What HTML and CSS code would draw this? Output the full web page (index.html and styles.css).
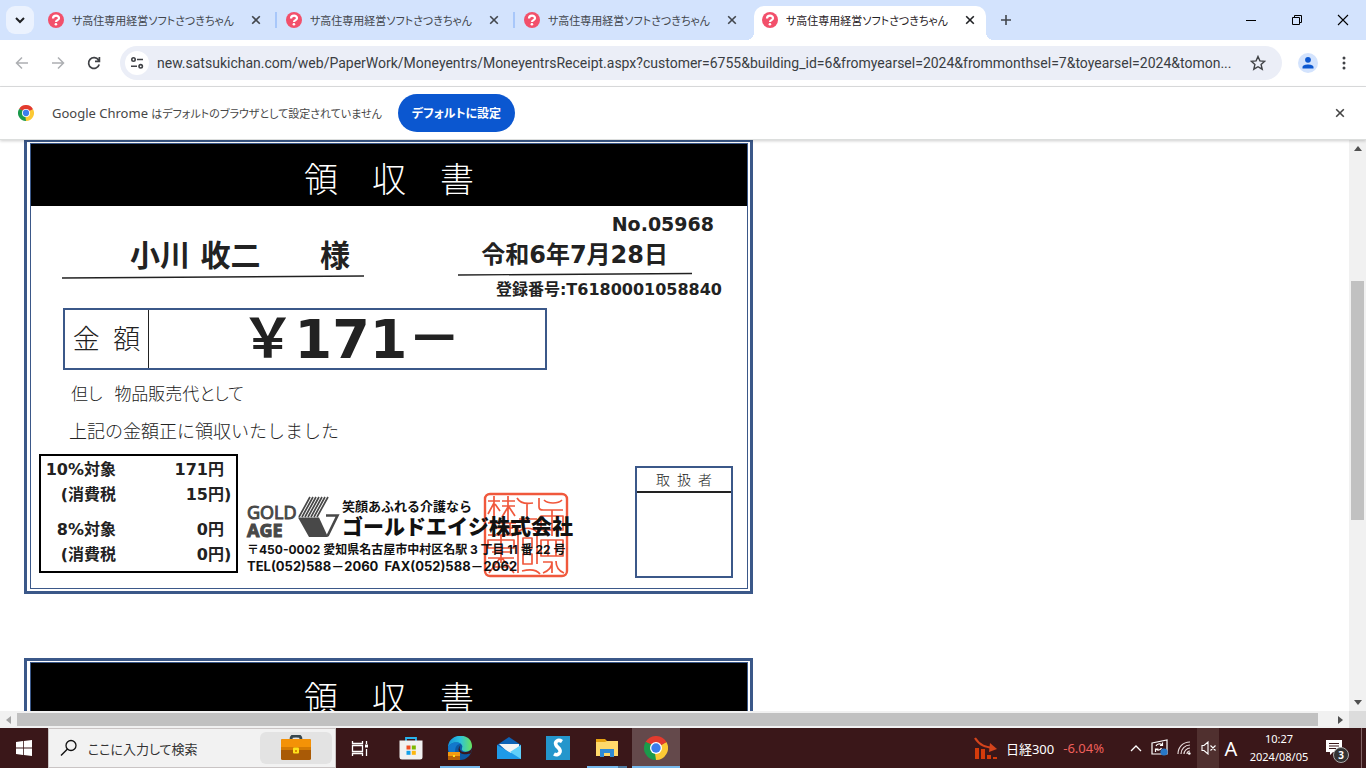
FILE: index.html
```html
<!DOCTYPE html>
<html lang="ja">
<head>
<meta charset="utf-8">
<title>サ高住専用経営ソフトさつきちゃん</title>
<link rel="stylesheet" href="styles.css">
</head>
<body>
<svg class="defs" aria-hidden="true">
  <symbol id="fav" viewBox="0 0 16 16"><circle cx="8" cy="8" r="8" fill="#f2506b"/><path d="M5 6.4C5 2.6 11.2 2.8 11 6.2 10.9 8.2 8 8 8 10" fill="none" stroke="#fff" stroke-width="2.2"/><circle cx="7.9" cy="12.3" r="1.3" fill="#fff"/></symbol>
  <symbol id="x" viewBox="0 0 10 10"><path d="M1.2 1.2l7.6 7.6M8.8 1.2L1.2 8.8" fill="none" stroke="currentColor" stroke-width="1.6"/></symbol>
  <symbol id="chrome" viewBox="0 0 48 48">
    <path d="M24 24L3.2 12A24 24 0 0 1 44.800 12z" fill="#e33b2e"/>
    <path d="M24 24L44.800 12A24 24 0 0 1 24 48z" fill="#fcc934"/>
    <path d="M24 24L24 48A24 24 0 0 1 3.200 12z" fill="#1b9a4b"/>
    <path d="M24 12h20.800L24 24z" fill="#e33b2e"/><path d="M34.400 30L24 48l-3-20z" fill="#fcc934"/><path d="M13.600 30L3.200 12 18 18z" fill="#1b9a4b"/>
    <circle cx="24" cy="24" r="12" fill="#fff"/><circle cx="24" cy="24" r="9.400" fill="#3b7ded"/>
  </symbol>
</svg>

<header class="tabstrip">
  <button class="tab-search" aria-label="タブを検索"><svg width="10" height="8" viewBox="0 0 10 8"><path d="M1 2l4 4 4-4" fill="none" stroke="currentColor" stroke-width="2"/></svg></button>
  <nav class="tabs">
    <div class="tab"><svg class="fav"><use href="#fav"/></svg><a href="#">サ高住専用経営ソフトさつきちゃん</a><button aria-label="閉じる"><svg><use href="#x"/></svg></button></div>
    <div class="tab"><svg class="fav"><use href="#fav"/></svg><a href="#">サ高住専用経営ソフトさつきちゃん</a><button aria-label="閉じる"><svg><use href="#x"/></svg></button></div>
    <div class="tab last"><svg class="fav"><use href="#fav"/></svg><a href="#">サ高住専用経営ソフトさつきちゃん</a><button aria-label="閉じる"><svg><use href="#x"/></svg></button></div>
    <div class="tab active"><svg class="fav"><use href="#fav"/></svg><a href="#">サ高住専用経営ソフトさつきちゃん</a><button aria-label="閉じる"><svg><use href="#x"/></svg></button></div>
  </nav>
  <button class="new-tab" aria-label="新しいタブ"><svg width="12" height="12" viewBox="0 0 12 12"><path d="M6 1v10M1 6h10" stroke="currentColor" stroke-width="1.600"/></svg></button>
  <div class="win">
    <button aria-label="最小化"><svg width="12" height="12" viewBox="0 0 12 12"><path d="M1 6.500h10" stroke="currentColor"/></svg></button>
    <button aria-label="元に戻す"><svg width="12" height="12" viewBox="0 0 12 12"><path d="M1.500 3.500h7v7h-7zM3.500 3.500v-2h7v7h-2" fill="none" stroke="currentColor"/></svg></button>
    <button aria-label="閉じる"><svg width="12" height="12" viewBox="0 0 12 12"><path d="M1 1l10 10M11 1L1 11" stroke="currentColor" stroke-width="1.100"/></svg></button>
  </div>
</header>

<div class="toolbar">
  <button class="nav off" aria-label="戻る"><svg width="14" height="14" viewBox="0 0 14 14"><path d="M13 7H2M7 1.500L1.500 7 7 12.500" fill="none" stroke="currentColor" stroke-width="1.500"/></svg></button>
  <button class="nav off" aria-label="進む"><svg width="14" height="14" viewBox="0 0 14 14"><path d="M1 7h11M7 1.500L12.500 7 7 12.500" fill="none" stroke="currentColor" stroke-width="1.500"/></svg></button>
  <button class="nav" aria-label="再読み込み"><svg width="14" height="14" viewBox="0 0 14 14"><path d="M12.200 8.500A5.400 5.400 0 1 1 11.500 4L12.500 5M12.400 1v4.400H8" fill="none" stroke="currentColor" stroke-width="1.700"/></svg></button>
  <div class="omnibox">
    <button class="site" aria-label="サイト情報"><svg width="14" height="14" viewBox="0 0 14 14"><g fill="none" stroke="currentColor" stroke-width="1.600"><circle cx="3.500" cy="3.500" r="1.700"/><path d="M7 3.500h6M1 10.300h6"/><circle cx="10.700" cy="10.300" r="1.700"/></g></svg></button>
    <input class="url" type="text" aria-label="アドレス" value="new.satsukichan.com/web/PaperWork/Moneyentrs/MoneyentrsReceipt.aspx?customer=6755&amp;building_id=6&amp;fromyearsel=2024&amp;frommonthsel=7&amp;toyearsel=2024&amp;tomon...">
    <button class="star" aria-label="ブックマーク"><svg width="16" height="16" viewBox="0 0 16 16"><path d="M8 1.500l1.900 4.400 4.800.4-3.600 3.200 1.100 4.700L8 11.700l-4.200 2.500 1.100-4.700L1.300 6.300l4.800-.4z" fill="none" stroke="currentColor" stroke-width="1.400"/></svg></button>
  </div>
  <button class="avatar" aria-label="プロフィール"><svg width="20" height="20" viewBox="0 0 20 20"><circle cx="10" cy="10" r="10" fill="#d3e3fd"/><circle cx="10" cy="6.800" r="2.900" fill="#0b57d0"/><path d="M4.500 15.500v-1.500c0-3.500 11-3.500 11 0v1.500z" fill="#0b57d0"/></svg></button>
  <button class="more" aria-label="メニュー"><svg width="4" height="14" viewBox="0 0 4 14"><g fill="currentColor"><circle cx="2" cy="2" r="1.500"/><circle cx="2" cy="7" r="1.500"/><circle cx="2" cy="12" r="1.500"/></g></svg></button>
</div>

<div class="infobar">
  <svg class="logo"><use href="#chrome"/></svg>
  <span class="msg">Google Chrome <span>はデフォルトのブラウザとして設定されていません</span></span>
  <button class="default">デフォルトに設定</button>
  <button class="dismiss" aria-label="閉じる"><svg><use href="#x"/></svg></button>
</div>

<main class="view">
  <div class="page">
    <article class="receipt"><div class="sheet">
      <h1>領　収　書</h1>
      <div class="top">
        <div class="customer">
          <p class="name"><span>小川 收二</span><span>様</span></p>
          <svg class="rule" viewBox="0 0 302 4" preserveAspectRatio="none"><path d="M0 3L302 1" stroke="#222" stroke-width="1.400"/></svg>
        </div>
        <div class="issue">
          <p class="no">No.05968</p>
          <p class="date">令和6年7月28日</p>
          <svg class="rule" viewBox="0 0 234 4" preserveAspectRatio="none"><path d="M0 3L234 1.500" stroke="#222" stroke-width="1.400"/></svg>
          <p class="reg">登録番号:T6180001058840</p>
        </div>
      </div>
      <div class="amount"><span class="label">金&ensp;額</span><strong>&#xFFE5;171&#xFF0D;</strong></div>
      <p class="note">但し<span>物品販売代として</span></p>
      <p class="note second">上記の金額正に領収いたしました</p>
      <div class="bottom">
        <table class="tax">
          <tr class="first"><th scope="row">10%対象</th><td>171円</td><td></td></tr>
          <tr><th scope="row">(消費税</th><td>15円</td><td>)</td></tr>
          <tr class="gap"><th scope="row">8%対象</th><td>0円</td><td></td></tr>
          <tr class="end"><th scope="row">(消費税</th><td>0円</td><td>)</td></tr>
        </table>
        <section class="company">
          <svg class="seal" width="86" height="86" viewBox="0 0 86 86" fill="none" stroke="#f0583c" stroke-width="1.700" stroke-linejoin="round">
            <rect x="2" y="2" width="82" height="82" rx="5" stroke-width="2.400"/>
            <path d="M5 9h12M11 4v24M11 11L5 22M12 12l5 7M19 9h13M25 4v24M19 14h13M25 15l-6 10M26 15l6 9M5 31h28M8 36h22M11 31v12M27 31v12M5 43h28"/>
            <path d="M34 6c3 5 10 6 16 5M44 11v15M36 27h18M56 6v9q0 3 4 3h20M61 8c4 4 14 4 18 0M58 24h22v14H58zM69 18v26"/>
            <path d="M5 48h26v8H5zM18 43v28M9 60h20M5 66h26M17 66L6 81M19 66l12 15M11 75h14M35 34v47M35 40c6-5 14-5 19 0v32M40 46h9v10h-9zM40 62h9v10h-9zM39 79c8-2 14-2 18 3"/>
            <path d="M58 48h22v16H58zM65 48v16M73 48v16M60 70h9v11M69 70c0 6-4 9-9 11M73 69c0 6 3 10 8 12"/>
          </svg>
          <div class="brand">
            <p class="ga">GOLD<b>AGE</b></p>
            <svg class="mark" width="42" height="42" viewBox="0 0 42 42"><path d="M0 21.500h21l9 19.500H11z" fill="#484848"/><path d="M1 21L12 1M4 21L15 1M7 21L18 1M10 21L21 1M13 21L24 1M16 21L27 1M19 21L30 1" stroke="#484848" stroke-width="1.700"/><path d="M28 19.500h11.500L29.500 40" fill="none" stroke="#484848" stroke-width="2.600"/></svg>
            <div><p class="slogan">笑顔あふれる介護なら</p><p class="corp">ゴールドエイジ株式会社</p></div>
          </div>
          <p class="addr">〒450-0002 愛知県名古屋市中村区名駅 3 丁目 11 番 22 号</p>
          <p class="tel">TEL(052)588&#xFF0D;2060&nbsp; FAX(052)588&#xFF0D;2062</p>
        </section>
        <div class="handler"><p>取&ensp;扱&ensp;者</p></div>
      </div>
    </div></article>
    <article class="receipt"><div class="sheet"><h1>領　収　書</h1></div></article>
  </div>
  <div class="vbar"><button aria-label="上へ"><svg width="8" height="5" viewBox="0 0 8 5"><path d="M0 5l4-5 4 5z" fill="#505050"/></svg></button><div class="track"><div class="thumb"></div></div><button aria-label="下へ"><svg width="8" height="5" viewBox="0 0 8 5"><path d="M0 0l4 5 4-5z" fill="#505050"/></svg></button></div>
</main>
<div class="hbar"><button aria-label="左へ"><svg width="5" height="8" viewBox="0 0 5 8"><path d="M5 0L0 4l5 4z" fill="#a3a3a3"/></svg></button><div class="thumb"></div><button class="right" aria-label="右へ"><svg width="5" height="8" viewBox="0 0 5 8"><path d="M0 0l5 4-5 4z" fill="#505050"/></svg></button><span class="corner"></span></div>

<footer class="taskbar">
  <button class="start" aria-label="スタート"><svg width="16" height="16" viewBox="0 0 16 16"><path d="M0 2l7-1v6.600H0zM7.800.9L16 0v7.600H7.800zM0 8.400h7V15l-7-1zM7.800 8.400H16V16l-8.200-1z" fill="#fff"/></svg></button>
  <label class="search"><svg width="18" height="18" viewBox="0 0 18 18"><circle cx="11" cy="6.500" r="5" fill="none" stroke="#111" stroke-width="1.300"/><path d="M7.500 10L1 16.500" stroke="#111" stroke-width="1.400"/></svg>
    <input type="text" placeholder="ここに入力して検索" aria-label="検索">
    <span class="bag"><svg width="30" height="26" viewBox="0 0 30 26"><path d="M10 5c0-4 1-4 5-4s5 0 5 4" fill="none" stroke="#37474f" stroke-width="3"/><rect y="4" width="30" height="21" rx="1.500" fill="#a95a06"/><path d="M0 5.500A1.500 1.500 0 0 1 1.500 4h27A1.500 1.500 0 0 1 30 5.500V15H0z" fill="#f49207"/><path d="M0 12h30v3H0z" fill="#d57a03"/><rect x="12" y="12.500" width="6" height="6" rx="1" fill="#ffe11a"/><path d="M14 15h2v2h-2z" fill="#d88c00"/></svg></span>
  </label>
  <button class="app view-btn" aria-label="タスクビュー"><svg width="18" height="17" viewBox="0 0 18 17"><path d="M1.500 1v2.500h10V1M1.500 16v-2.500h10V16M1.500 5.500h10v6h-10zM15.500 1v3M15.500 9v7" fill="none" stroke="#fff" stroke-width="1.300"/><path d="M14 4.500h3v3h-3z" fill="#fff"/></svg></button>
  <button class="app" aria-label="Store"><svg width="24" height="24" viewBox="0 0 24 24"><path d="M7 5V2h10v3" fill="none" stroke="#28b4ee" stroke-width="1.800"/><path d="M.5 4.500h23V21q0 2.500-2.500 2.500H3Q.5 23.500.5 21z" fill="#f1f1f1"/><path d="M7.500 9.500h4v4h-4z" fill="#f04e24"/><path d="M12.800 9.500h4v4h-4z" fill="#7db900"/><path d="M7.500 14.800h4v4h-4z" fill="#14a1ea"/><path d="M12.800 14.800h4v4h-4z" fill="#fdb70e"/></svg></button>
  <button class="app run" aria-label="Edge"><svg width="24" height="24" viewBox="0 0 24 24"><defs><linearGradient id="eg"><stop offset="0" stop-color="#1593d8"/><stop offset=".5" stop-color="#2cc1dd"/><stop offset="1" stop-color="#6be35b"/></linearGradient></defs><circle cx="12" cy="12" r="12" fill="#0c59a4"/><path d="M0 12C0-4 24-4 24 10c0 6-8 7-10 4-1-2 2-3-1-6C9 5 1 7 0 12z" fill="url(#eg)"/><path d="M13 9c-3 3-1 8 5 7 3 0 5-2 6-4 0 3-1 5-2 6-1-1-3 1-7 0-5-1-6-6-2-9z" fill="#3a171a"/><path d="M0 12c1-5 9-7 13-4-6-1-8 8-3 15C4 22 0 17 0 12z" fill="#1378cc"/><path d="M0 16h12v8H0z" fill="#b96207"/><path d="M0 16h12v4H0z" fill="#f39a11"/><path d="M5 19h2v2H5z" fill="#ffe11a"/></svg></button>
  <button class="app" aria-label="メール"><svg width="24" height="24" viewBox="0 0 24 24"><path d="M0 9L12 1l12 8v5H0z" fill="#0d62b5"/><path d="M2 8h20v8l-8 3z" fill="#f4f4f4"/><path d="M0 9l14 8L24 9v14H0z" fill="#1f9ae8"/><path d="M24 9v14L13 16z" fill="#60d0fa"/></svg></button>
  <button class="app" aria-label="S"><span class="s-tile"><svg width="24" height="24" viewBox="0 0 24 24"><path d="M16 5.500C12 3 8.500 5.500 10 9c1 2.500 5 3.500 4 7-.8 2.500-3.500 3.500-6 2" fill="none" stroke="#fff" stroke-width="3.600"/></svg></span></button>
  <button class="app run files" aria-label="エクスプローラー"><svg width="24" height="24" viewBox="0 0 24 24"><path d="M1 3h9l2 2h11v15H1z" fill="#e6a211"/><path d="M1 6h9l2-1h11v15H1z" fill="#ffd96b"/><path d="M5 21v-8h14v8h-4v-4H9v4z" fill="#2f8bd5"/></svg></button>
  <button class="app run current" aria-label="Google Chrome"><svg width="24" height="24"><use href="#chrome"/></svg></button>
  <div class="tray">
    <a class="stock" href="#"><svg width="24" height="24" viewBox="0 0 24 24"><path d="M1 2c5 8 11 9 18 10" fill="none" stroke="#d5441c" stroke-width="2.200"/><path d="M16 7l7 6-8 3z" fill="#d5441c"/><path d="M1 12h4v11H1zM7 13h4v10H7zM13 19h4v4h-4zM19 21h4v2h-4z" fill="#d33b0b"/></svg><span>日経300</span><em>-6.04%</em></a>
    <button class="t" aria-label="隠れているインジケーター"><svg width="12" height="8" viewBox="0 0 12 8"><path d="M1 7l5-5 5 5" fill="none" stroke="#fff" stroke-width="1.300"/></svg></button>
    <button class="t" aria-label="更新"><svg width="18" height="18" viewBox="0 0 18 18"><path d="M1 4l15-3v14H1z" fill="none" stroke="#fff" stroke-width="1.200"/><path d="M5 7c1-2 4-3 6-1M11.500 3.500v3H9M10.500 9c-1 2-4 3-5.500 1M4.500 13v-3h3" fill="none" stroke="#fff" stroke-width="1.200"/><circle cx="13" cy="13" r="3.600" fill="#2878c8"/></svg></button>
    <button class="t" aria-label="ネットワーク"><svg width="14" height="14" viewBox="0 0 14 14"><g fill="none" stroke="#e8dcdc" stroke-width="1.200"><path d="M1 13C1 6 6 1 13 1M4 13c0-5 4-9 9-9M7 13c0-3 3-6 6-6M10 13c0-2 1-3 3-3"/></g><circle cx="12.300" cy="12.500" r="1.300" fill="#fff"/></svg></button>
    <button class="t sound" aria-label="ミュート"><svg width="15" height="14" viewBox="0 0 15 14"><path d="M1 4.500h2l4-3.500v12L3 9.500H1zM9.500 4.500l5 5M14.500 4.500l-5 5" fill="none" stroke="#fff" stroke-width="1.100"/></svg></button>
    <button class="t ime">A</button>
    <div class="clock"><time>10:27</time><span>2024/08/05</span></div>
    <button class="bell" aria-label="通知"><svg width="16" height="16" viewBox="0 0 16 16"><path d="M0 0h16v12H7l-3 3v-3H0z" fill="#fff"/><path d="M3 3.500h10M3 6h10M3 8.500h7" stroke="#3a1719" stroke-width="1.200"/></svg><span>3</span></button>
    <span class="peek"></span>
  </div>
</footer>
</body>
</html>
```
FILE: styles.css
```css
* { box-sizing: border-box; }
html, body { height: 100%; }
body { margin: 0; display: flex; flex-direction: column; overflow: hidden; background: #fff; color: #202124; font-family: "Noto Sans", "Noto Sans CJK JP", sans-serif; font-size: 12px; }
button { border: 0; padding: 0; background: none; color: inherit; font: inherit; display: flex; align-items: center; justify-content: center; flex: none; }
input { border: 0; padding: 0; background: none; outline: 0; font: inherit; min-width: 0; }
a { color: inherit; text-decoration: none; }
p, h1 { margin: 0; }
svg { flex: none; display: block; }
.defs { position: absolute; width: 0; height: 0; }

.tabstrip { flex: none; height: 40px; display: flex; align-items: center; background: #d3e3fd; padding-left: 6px; }
.tab-search { width: 28px; height: 28px; border-radius: 9px; background: #ebf2fe; }
.tabs { display: flex; align-self: flex-end; margin-left: 6px; }
.tab { position: relative; width: 232px; margin-right: 6px; height: 34px; display: flex; align-items: center; padding: 0 10px 6px 8px; color: #42464c; }
.tab a { flex: 1; margin-left: 8px; white-space: nowrap; overflow: hidden; font-family: "Noto Sans CJK JP", sans-serif; font-feature-settings: "palt"; font-size: 11px; line-height: 18px; }
.fav { width: 16px; height: 16px; }
.tab button svg, .dismiss svg { width: 10px; height: 10px; }
.tab button { width: 12px; height: 16px; }
.tab:not(.active):not(.last)::after { content: ""; position: absolute; right: -5px; top: 6px; width: 2px; height: 16px; background: #a8c7fa; }
.tab.active { background: #fff; border-radius: 10px 10px 0 0; color: #1f2023; }
.tab.active::before, .tab.active::after { content: ""; position: absolute; bottom: 0; width: 8px; height: 8px; }
.tab.active::before { left: -8px; background: radial-gradient(circle at 0 0, #d3e3fd 8px, #fff 8px); }
.tab.active::after { right: -8px; background: radial-gradient(circle at 100% 0, #d3e3fd 8px, #fff 8px); }
.new-tab { width: 28px; height: 28px; color: #42464c; }
.win { margin-left: auto; display: flex; color: #000; }
.win button { width: 46px; height: 40px; }

.toolbar { flex: none; height: 47px; display: flex; align-items: center; padding: 0 18px 0 4px; border-bottom: 1px solid #dedfe1; color: #404246; background: #fff; }
.nav { width: 36px; height: 34px; }
.off { color: #adafb2; }
.omnibox { flex: 1; min-width: 0; height: 34px; margin-left: 8px; border-radius: 17px; background: #ebeef7; display: flex; align-items: center; padding: 0 16px 0 5px; }
.site { width: 24px; height: 24px; border-radius: 12px; background: #fff; }
.url { flex: 1; margin: 0 16px 0 8px; font-family: Roboto, sans-serif; font-size: 14px; line-height: 20px; color: #3a3d42; text-overflow: ellipsis; }
.avatar { margin-left: 16px; }
.more { margin-left: 22px; width: 8px; }

.infobar { position: relative; z-index: 2; flex: none; height: 53px; display: flex; align-items: center; padding: 0 21px 0 18px; background: #fff; border-bottom: 1px solid #dcdedd; box-shadow: 0 1px 3px #0003; }
.logo { width: 16px; height: 16px; }
.msg { margin-left: 18px; font-size: 13px; color: #474747; font-feature-settings: "palt"; white-space: nowrap; }
.msg span { font-size: 11px; }
.default { margin-left: 16px; height: 38px; padding: 0 14px; border-radius: 19px; background: #0b57d0; color: #fff; font-weight: 700; font-feature-settings: "palt"; white-space: nowrap; }
.dismiss { margin-left: auto; color: #444; }

.view { flex: 1; min-height: 0; display: flex; }
.page { flex: 1; min-width: 0; overflow: hidden; padding-left: 24px; }
.receipt { width: 729px; height: 455px; margin: -1px 0 64px; border: 3px solid #3b5889; padding: 1px 2px 2px 3px; background: #fff; }
.receipt + .receipt { margin-top: 0; }
.sheet { height: 100%; border: 1px solid #3b5889; color: #222; font-family: "DejaVu Sans", "Noto Sans CJK JP", sans-serif; }
.receipt h1 { height: 62px; padding-top: 9px; background: #000; color: #fff; text-align: center; font-family: "Noto Sans CJK JP", serif; font-weight: 300; font-size: 34px; line-height: 50px; }
.top { display: flex; justify-content: space-between; padding: 0 25px 0 31px; height: 102px; font-weight: 700; }
.customer { width: 302px; padding-top: 31px; }
.name { display: flex; justify-content: space-between; padding: 0 14px 0 68px; font-size: 30px; line-height: 38px; white-space: nowrap; }
.rule { width: 100%; height: 4px; }
.issue { display: flex; flex-direction: column; align-items: flex-end; width: 264px; padding-top: 4px; white-space: nowrap; }
.no { font-size: 19px; line-height: 28px; padding-right: 8px; }
.date { font-size: 24px; line-height: 34px; padding-right: 54px; }
.issue .rule { width: 234px; margin-right: 30px; }
.reg { font-size: 16px; line-height: 28px; }
.amount { width: 484px; height: 62px; margin-left: 32px; border: 2px solid #3b5889; display: flex; }
.label { width: 84px; border-right: 1px solid #222; text-align: center; font-family: "Noto Sans CJK JP", serif; font-weight: 300; font-size: 27px; line-height: 56px; }
.amount strong { flex: 1; text-align: center; font-size: 54px; line-height: 60px; padding-left: 8px; white-space: nowrap; }
.note { margin: 11px 0 0 40px; font-family: "Noto Sans CJK JP", serif; font-weight: 300; font-size: 17px; line-height: 24px; font-feature-settings: "palt"; }
.note span { margin-left: 12px; }
.note.second { margin: 13px 0 0 38px; font-size: 18px; font-feature-settings: normal; }
.bottom { display: flex; margin: 12px 14px 0 8px; align-items: flex-start; }
.tax { width: 199px; border: 2px solid #000; border-collapse: separate; border-spacing: 0; font-size: 16px; line-height: 25px; font-weight: 700; table-layout: fixed; }
.tax th { width: 75px; padding: 0; text-align: right; white-space: nowrap; }
.tax td { padding: 0; text-align: right; }
.tax td:last-child { width: 12px; text-align: left; }
.tax .first > * { padding-top: 1px; }
.tax .gap > * { padding-top: 10px; }
.tax .end > * { padding-bottom: 4px; }
.company { position: relative; margin: 41px 0 0 9px; color: #111; font-weight: 700; white-space: nowrap; font-family: Inter, "Noto Sans CJK JP", sans-serif; }
.company p { position: relative; }
.seal { position: absolute; left: 236px; top: -3px; }
.brand { display: flex; height: 47px; padding-top: 1px; }
.ga { width: 50px; margin-top: 7px; font: 400 18px/18px "Open Sans", sans-serif; color: #484848; -webkit-text-stroke: 1px #484848; }
.ga b { display: block; font-weight: 700; }
.mark { margin: 0 2px 0 1px; }
.slogan { font-size: 13px; line-height: 20px; }
.corp { font-size: 21px; line-height: 22px; font-weight: 900; }
.addr { font-size: 12px; line-height: 16px; }
.tel { font-size: 13px; line-height: 16px; }
.handler { width: 98px; height: 112px; margin: 12px 0 0 auto; border: 2px solid #3b5889; }
.handler p { border-bottom: 2px solid #222; text-align: center; font-family: "Noto Sans CJK JP", serif; font-weight: 300; font-size: 14px; line-height: 23px; }

.vbar { width: 17px; background: #f1f1f1; display: flex; flex-direction: column; }
.vbar button { width: 17px; height: 17px; }
.track { flex: 1; display: grid; grid-template-rows: 124fr 239fr 174fr; }
.track .thumb { grid-row: 2; margin: 0 2px; background: #c1c1c1; }
.hbar { flex: none; height: 17px; display: flex; background: #f1f1f1; }
.hbar button { width: 17px; }
.hbar .thumb { flex: 1; margin: 2px 14px 2px 0; background: #c1c1c1; }
.corner { width: 17px; background: #dcdcdc; }

.taskbar { flex: none; height: 40px; display: flex; background: #3a1719; color: #fff; }
.start { width: 48px; }
.search { width: 288px; display: flex; align-items: center; padding: 0 3px 0 11px; background: #f2f2f2; border: 1px solid #c9c4c4; }
.search input { flex: 1; margin-left: 10px; font-family: "Noto Sans CJK JP", sans-serif; font-size: 13px; font-feature-settings: "palt"; }
.search input::placeholder { color: #333; opacity: 1; }
.bag { width: 72px; height: 32px; border-radius: 6px; background: #e3e3e3; display: flex; align-items: center; justify-content: center; }
.app { width: 48px; margin-right: 1px; }
.view-btn { margin-right: 3px; }
.run { background: linear-gradient(#76b9ed, #76b9ed) center bottom / 40px 2px no-repeat; }
.files { background: linear-gradient(90deg, #76b9ed 31px, #4f7ba2 31px) center bottom / 40px 2px no-repeat; }
.current { background: linear-gradient(#76b9ed, #76b9ed) center bottom / 48px 2px no-repeat, #64494b; }
.s-tile { background: #2496cc; }
.tray { margin-left: auto; display: flex; align-items: stretch; }
.stock { display: flex; align-items: center; font-size: 13px; white-space: nowrap; margin-right: 20px; }
.stock span { margin-left: 8px; }
.stock em { margin-left: 9px; font-style: normal; color: #f0605c; }
.t { width: 24px; }
.sound { width: 22px; margin-left: 1px; background: #50302f; }
.ime { font-size: 20px; }
.clock { width: 72px; display: flex; flex-direction: column; align-items: center; font-size: 11px; line-height: 18px; padding-top: 2px; }
.bell { position: relative; width: 38px; }
.bell span { position: absolute; left: 18px; top: 19px; width: 16px; height: 16px; border: 1px solid #aaa; border-radius: 50%; background: #333; font-size: 10px; line-height: 14px; font-weight: 700; }
.peek { width: 5px; margin-left: 8px; border-left: 1px solid #806365; }
```
